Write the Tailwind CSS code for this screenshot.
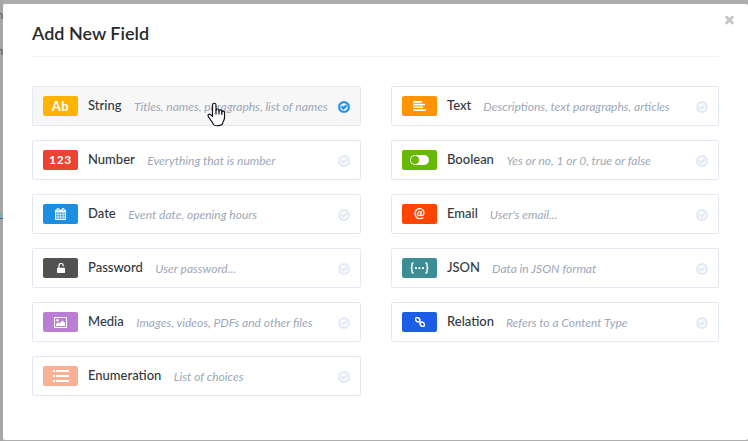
<!DOCTYPE html>
<html lang="en">
<head>
<meta charset="utf-8">
<title>Add New Field</title>
<script src="https://cdn.jsdelivr.net/npm/@tailwindcss/browser@4"></script>
</head>
<body class="relative h-[441px] w-[748px] overflow-hidden bg-[#adadad] pt-1 pl-[3px] font-['Lato',sans-serif]">
<svg class="hidden">
  <symbol id="check" viewBox="98 98 1596 1596"><path stroke-width="60" d="M1299 813l-422 422q-19 19-45 19t-45-19l-294-294q-19-19-19-45t19-45l102-102q19-19 45-19t45 19l147 147 275-275q19-19 45-19t45 19l102 102q19 19 19 45t-19 45zm141 83q0-148-73-273t-198-198-273-73-273 73-198 198-73 273 73 273 198 198 273 73 273-73 198-198 73-273zm224 0q0 209-103 385.500t-279.500 279.500-385.500 103-385.500-103-279.500-279.500-103-385.500 103-385.500 279.500-279.500 385.500-103 385.500 103 279.500 279.500 103 385.500z"/></symbol>
</svg>

<!-- page edge left visible behind the dialog -->
<div class="absolute top-0 left-0 h-[441px] w-[3px] overflow-hidden bg-[#a6a6a6] text-[11px] text-[#6b4a3a]">
  <div class="absolute top-[9px] -left-[3px] leading-3">n</div>
  <div class="absolute top-[45px] -left-[3px] leading-3">n</div>
  <div class="absolute top-[212px] left-0 h-1.5 w-px bg-[#7fa6ad]"></div>
  <div class="absolute top-[218px] left-0 h-px w-[3px] bg-[#1f6fb8]"></div>
</div>

<main class="relative h-[436px] w-[745px] rounded-xs bg-white pr-[29px] pl-[29px]">
  <svg class="absolute top-[12px] right-[14px] size-[9px] fill-[#c3c5c8]" viewBox="302 434 1188 1188"><path d="M1490 1322q0 40-28 68l-136 136q-28 28-68 28t-68-28l-294-294-294 294q-28 28-68 28t-68-28l-136-136q-28-28-28-68t28-68l294-294-294-294q-28-28-28-68t28-68l136-136q28-28 68-28t68 28l294 294 294-294q28-28 68-28t68 28l136 136q28 28 28 68t-28 68l-294 294 294 294q28 28 28 68z"/></svg>
  <header class="h-[53px] border-b border-[#f3f3f4] pt-[17px]">
    <h1 class="text-[18px] leading-6 font-semibold text-[#292b2c]">Add New Field</h1>
  </header>

  <div class="grid grid-cols-[329px_328px] gap-x-[30px] gap-y-[14px] pt-[29px]">
    <div class="flex h-10 items-center rounded-xs border border-[#e3e9f3] bg-[#f7f7f7] px-[10px]">
      <div class="flex h-5 w-[35px] items-center justify-center rounded-xs bg-[#ffb500] pb-px text-[13px] leading-5 font-bold tracking-[0.5px] text-white">Ab</div>
      <span class="ml-[10px] pb-[2px] text-[13px] leading-5 font-medium text-[#333740]">String</span>
      <span class="ml-[12.5px] pt-[2px] text-[12px] leading-5 text-[#9ea7b8] italic">Titles, names, paragraphs, list of names</span>
      <svg class="mt-[2px] ml-auto size-3 fill-[#1c91f1] stroke-[#1c91f1]"><use href="#check"/></svg>
    </div>
    <div class="flex h-10 items-center rounded-xs border border-[#e3e9f3] px-[10px]">
      <div class="flex h-5 w-[35px] items-center justify-center rounded-xs bg-[#ff9300]">
        <svg class="h-[10px] w-[13px] fill-white" viewBox="0 0 13 10"><path d="M0 0h9v1.700H0zM0 2.700h12v1.700H0zM0 5.400h10v1.700H0zM0 8.200h13v1.700H0z"/></svg>
      </div>
      <span class="ml-[10px] pb-[2px] text-[13px] leading-5 font-medium text-[#333740]">Text</span>
      <span class="ml-3 pt-[2px] text-[12px] leading-5 text-[#9ea7b8] italic">Descriptions, text paragraphs, articles</span>
      <svg class="mt-[2px] ml-auto size-3 fill-[#e3e9f3] stroke-[#e3e9f3]"><use href="#check"/></svg>
    </div>

    <div class="flex h-10 items-center rounded-xs border border-[#e3e9f3] px-[10px]">
      <div class="flex h-5 w-[35px] items-center justify-center rounded-xs bg-[#e94331] text-[12px] leading-5 font-bold tracking-[0.7px] text-white">123</div>
      <span class="ml-[10px] pb-[2px] text-[13px] leading-5 font-medium text-[#333740]">Number</span>
      <span class="ml-[12.5px] pt-[2px] text-[12px] leading-5 text-[#9ea7b8] italic">Everything that is number</span>
      <svg class="mt-[2px] ml-auto size-3 fill-[#e3e9f3] stroke-[#e3e9f3]"><use href="#check"/></svg>
    </div>
    <div class="flex h-10 items-center rounded-xs border border-[#e3e9f3] px-[10px]">
      <div class="flex h-5 w-[35px] items-center justify-center rounded-xs bg-[#66b803]">
        <svg class="h-[10px] w-[19px]" viewBox="0 0 19 10"><rect width="19" height="10" rx="5" fill="#fff"/><circle cx="5" cy="5" r="4.100" fill="#66b803"/></svg>
      </div>
      <span class="ml-[10px] pb-[2px] text-[13px] leading-5 font-medium text-[#333740]">Boolean</span>
      <span class="ml-[12.5px] pt-[2px] text-[12px] leading-5 text-[#9ea7b8] italic">Yes or no, 1 or 0, true or false</span>
      <svg class="mt-[2px] ml-auto size-3 fill-[#e3e9f3] stroke-[#e3e9f3]"><use href="#check"/></svg>
    </div>

    <div class="flex h-10 items-center rounded-xs border border-[#e3e9f3] px-[10px]">
      <div class="flex h-5 w-[35px] items-center justify-center rounded-xs bg-[#1c8fe3]">
        <svg class="h-3 w-[11px] fill-white stroke-white" stroke-width="40" viewBox="64 0 1664 1792"><path d="M192 1664h288v-288h-288v288zm352 0h320v-288h-320v288zm-352-352h288v-320h-288v320zm352 0h320v-320h-320v320zm-352-384h288v-288h-288v288zm736 736h320v-288h-320v288zm-384-736h320v-288h-320v288zm768 736h288v-288h-288v288zm-384-352h320v-320h-320v320zm-352-864v-288q0-13-9.500-22.500t-22.500-9.500h-64q-13 0-22.500 9.500t-9.500 22.500v288q0 13 9.500 22.500t22.500 9.500h64q13 0 22.500-9.500t9.500-22.500zm736 864h288v-320h-288v320zm-384-384h320v-288h-320v288zm384 0h288v-288h-288v288zm32-480v-288q0-13-9.500-22.500t-22.500-9.500h-64q-13 0-22.500 9.500t-9.500 22.500v288q0 13 9.500 22.500t22.500 9.500h64q13 0 22.500-9.500t9.500-22.500zm384-64v1280q0 52-38 90t-90 38h-1408q-52 0-90-38t-38-90v-1280q0-52 38-90t90-38h128v-96q0-66 47-113t113-47h64q66 0 113 47t47 113v96h384v-96q0-66 47-113t113-47h64q66 0 113 47t47 113v96h128q52 0 90 38t38 90z"/></svg>
      </div>
      <span class="ml-[10px] pb-[2px] text-[13px] leading-5 font-medium text-[#333740]">Date</span>
      <span class="ml-[12.5px] pt-[2px] text-[12px] leading-5 text-[#9ea7b8] italic">Event date, opening hours</span>
      <svg class="mt-[2px] ml-auto size-3 fill-[#e3e9f3] stroke-[#e3e9f3]"><use href="#check"/></svg>
    </div>
    <div class="flex h-10 items-center rounded-xs border border-[#e3e9f3] px-[10px]">
      <div class="flex h-5 w-[35px] items-center justify-center rounded-xs bg-[#ff4500] pb-[2px] text-[13px] leading-5 font-bold text-white">@</div>
      <span class="ml-[10px] pb-[2px] text-[13px] leading-5 font-medium text-[#333740]">Email</span>
      <span class="ml-3 pt-[2px] text-[12px] leading-5 text-[#9ea7b8] italic">User's email...</span>
      <svg class="mt-[2px] ml-auto size-3 fill-[#e3e9f3] stroke-[#e3e9f3]"><use href="#check"/></svg>
    </div>

    <div class="flex h-10 items-center rounded-xs border border-[#e3e9f3] px-[10px]">
      <div class="flex h-5 w-[35px] items-center justify-center rounded-xs bg-[#515150]">
        <svg class="h-[10px] w-2" viewBox="0 0 8 10"><path d="M2 5V2.700a2 2 0 0 1 4.200-.2v.7" fill="none" stroke="#fff" stroke-width="1.200"/><rect y="4.800" width="8" height="5.200" rx=".5" fill="#fff"/></svg>
      </div>
      <span class="ml-[10px] pb-[2px] text-[13px] leading-5 font-medium text-[#333740]">Password</span>
      <span class="ml-[12.5px] pt-[2px] text-[12px] leading-5 text-[#9ea7b8] italic">User password...</span>
      <svg class="mt-[2px] ml-auto size-3 fill-[#e3e9f3] stroke-[#e3e9f3]"><use href="#check"/></svg>
    </div>
    <div class="flex h-10 items-center rounded-xs border border-[#e3e9f3] px-[10px]">
      <div class="flex h-5 w-[35px] items-center justify-center rounded-xs bg-[#3d8e94]">
        <svg class="h-3 w-[19px]" viewBox="0 0 19 12"><path d="M3.600 1H3Q2 1 2 2v2.400Q2 6 .6 6 2 6 2 7.600V10q0 1 1 1h.6M15.400 1h.6q1 0 1 1v2.400Q17 6 18.400 6 17 6 17 7.600V10q0 1-1 1h-.6" fill="none" stroke="#fff" stroke-width="1.400"/><path d="M5 5.200h2V7H5zM8.500 5.200h2V7h-2zM12 5.200h2V7h-2z" fill="#fff"/></svg>
      </div>
      <span class="ml-[10px] pb-[2px] text-[13px] leading-5 font-medium text-[#333740]">JSON</span>
      <span class="ml-3 pt-[2px] text-[12px] leading-5 text-[#9ea7b8] italic">Data in JSON format</span>
      <svg class="mt-[2px] ml-auto size-3 fill-[#e3e9f3] stroke-[#e3e9f3]"><use href="#check"/></svg>
    </div>

    <div class="flex h-10 items-center rounded-xs border border-[#e3e9f3] px-[10px]">
      <div class="flex h-5 w-[35px] items-center justify-center rounded-xs bg-[#ba7fd4]">
        <svg class="h-[11px] w-[13px]" viewBox="0 0 13 11"><rect x=".5" y=".5" width="12" height="10" fill="none" stroke="#fff"/><circle cx="3.500" cy="3.300" r="1.200" fill="#fff"/><path d="M2 9V7.300l2-2 1.300 1.300L8.500 3.400 11 5.900V9z" fill="#fff"/></svg>
      </div>
      <span class="ml-[10px] pb-[2px] text-[13px] leading-5 font-medium text-[#333740]">Media</span>
      <span class="ml-[12.5px] pt-[2px] text-[12px] leading-5 text-[#9ea7b8] italic">Images, videos, PDFs and other files</span>
      <svg class="mt-[2px] ml-auto size-3 fill-[#e3e9f3] stroke-[#e3e9f3]"><use href="#check"/></svg>
    </div>
    <div class="flex h-10 items-center rounded-xs border border-[#e3e9f3] px-[10px]">
      <div class="flex h-5 w-[35px] items-center justify-center rounded-xs bg-[#1c5de7]">
        <svg class="h-[10px] w-[10px]" viewBox="0 0 10 10"><g transform="rotate(45 5 5)" fill="none" stroke="#fff" stroke-width="1.500"><rect x="-.6" y="3.200" width="4.600" height="3.600" rx="1.600"/><rect x="6" y="3.200" width="4.600" height="3.600" rx="1.600"/><path d="M3.500 5h3"/></g></svg>
      </div>
      <span class="ml-[10px] pb-[2px] text-[13px] leading-5 font-medium text-[#333740]">Relation</span>
      <span class="ml-3 pt-[2px] text-[12px] leading-5 text-[#9ea7b8] italic">Refers to a Content Type</span>
      <svg class="mt-[2px] ml-auto size-3 fill-[#e3e9f3] stroke-[#e3e9f3]"><use href="#check"/></svg>
    </div>

    <div class="flex h-10 items-center rounded-xs border border-[#e3e9f3] px-[10px]">
      <div class="flex h-5 w-[35px] items-center justify-center rounded-xs bg-[#f9b093]">
        <svg class="h-3 w-4 fill-white" viewBox="0 0 16 12"><path d="M0 0h2v2H0zM3 0h13v2H3zM0 5h2v2H0zM3 5h13v2H3zM0 10h2v2H0zM3 10h13v2H3z"/></svg>
      </div>
      <span class="ml-[10px] pb-[2px] text-[13px] leading-5 font-medium text-[#333740]">Enumeration</span>
      <span class="ml-[12.5px] pt-[2px] text-[12px] leading-5 text-[#9ea7b8] italic">List of choices</span>
      <svg class="mt-[2px] ml-auto size-3 fill-[#e3e9f3] stroke-[#e3e9f3]"><use href="#check"/></svg>
    </div>
  </div>
</main>

<!-- hand pointer over the first row -->
<svg class="absolute top-[102px] left-[207px] h-[25px] w-[19px]" viewBox="0 0 19 25"><path d="M5.500 14.500V3a1.700 1.700 0 0 1 3.500 0v5.500a1.500 1.500 0 0 1 3 0v.6a1.400 1.400 0 0 1 2.800.3v.8a1.300 1.300 0 0 1 2.700.4V16c0 2.200-1.800 3.300-1.800 5.500C14.600 24 8 24.500 6.500 22.500 5.500 20 4 18.500 2.500 16.500 1 14.500.5 13.300 1.500 12.500c1.300-1 2.700.3 4 2z" fill="#fff" stroke="#14141c" stroke-width="1.200" stroke-linejoin="round"/><path d="M9 8.500V12M12 8.800V12M14.800 9.800V12.500" stroke="#14141c" stroke-width="1.200" stroke-linecap="round"/></svg>
</body>
</html>
